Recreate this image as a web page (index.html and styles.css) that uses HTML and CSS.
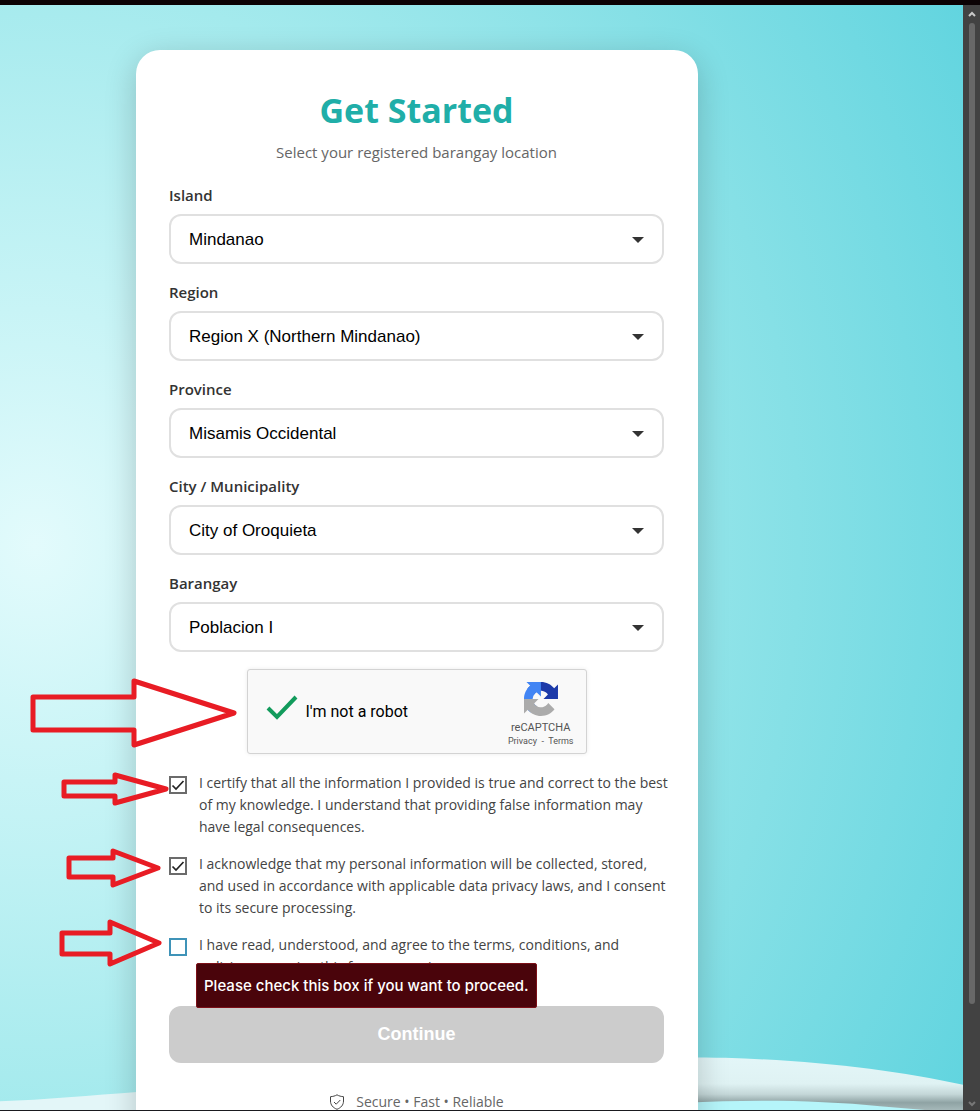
FILE: index.html
```html
<!DOCTYPE html>
<html lang="en">
<head>
    <meta charset="UTF-8">
    <meta name="viewport" content="width=device-width, initial-scale=1.0">
    <title>Get Started</title>
    <link rel="stylesheet" href="styles.css">
</head>
<body>
    <div class="window">
        <main class="page">
            <svg class="waves" viewBox="0 0 963 60" preserveAspectRatio="none" aria-hidden="true">
                <defs>
                    <linearGradient id="wave" x1="0" y1="0" x2="0" y2="1">
                        <stop offset="0" stop-color="#e3f6f8"/>
                        <stop offset="0.5" stop-color="#dff2f3"/>
                        <stop offset="0.7" stop-color="#c4d7d8"/>
                        <stop offset="0.86" stop-color="#8fa3a4"/>
                        <stop offset="1" stop-color="#a5b8b9"/>
                    </linearGradient>
                </defs>
                <path fill="#e3f6f8" d="M0 51 C45 49 90 45 140 41 L400 20 V60 H0Z"/>
                <path fill="url(#wave)" d="M400 20 C560 6 650 5 725 6 C820 9 895 19 963 34 V60 H400Z"/>
                <path fill="#b5f5fa" d="M600 60 C700 48 800 48 880 56 L925 60Z"/>
            </svg>

            <div class="card">
                <h1>Get Started</h1>
                <p class="subtitle">Select your registered barangay location</p>
                <form class="location-form">
                    <label for="island">Island</label>
                    <select id="island"><option>Mindanao</option></select>
                    <label for="region">Region</label>
                    <select id="region"><option>Region X (Northern Mindanao)</option></select>
                    <label for="province">Province</label>
                    <select id="province"><option>Misamis Occidental</option></select>
                    <label for="city">City / Municipality</label>
                    <select id="city"><option>City of Oroquieta</option></select>
                    <label for="barangay">Barangay</label>
                    <select id="barangay"><option>Poblacion I</option></select>

                    <div class="captcha">
                        <svg class="captcha-check" viewBox="0 0 34 28" aria-hidden="true">
                            <path d="M3 14 L12 23 L31 3" fill="none" stroke="#129b5c" stroke-width="4"/>
                        </svg>
                        <span class="captcha-text">I'm not a robot</span>
                        <div class="captcha-brand">
                            <svg class="captcha-logo" viewBox="0 0 64 64" aria-hidden="true">
                                <path fill="#1c3aa9" d="M64 31.955l-.033-1.37V4.687l-7.16 7.16C50.948 4.674 42.033.093 32.05.093c-10.4 0-19.622 4.96-25.458 12.64l11.736 11.86a15.55 15.55 0 0 1 4.754-5.334c2.05-1.6 4.952-2.906 8.968-2.906.485 0 .86.057 1.135.163 4.976.393 9.288 3.14 11.828 7.124l-8.307 8.307L64 31.953"/>
                                <path fill="#4285f4" d="M31.862.094l-1.37.033H4.594l7.16 7.16C4.58 13.147 0 22.06 0 32.046c0 10.4 4.96 19.622 12.64 25.458L24.5 45.768a15.55 15.55 0 0 1-5.334-4.754c-1.6-2.05-2.906-4.952-2.906-8.968 0-.485.057-.86.163-1.135.393-4.976 3.14-9.288 7.124-11.828l8.307 8.307L31.86.095"/>
                                <path fill="#ababab" d="M.001 32.045l.033 1.37v25.898l7.16-7.16c5.86 7.173 14.774 11.754 24.76 11.754 10.4 0 19.622-4.96 25.458-12.64l-11.736-11.86a15.55 15.55 0 0 1-4.754 5.334c-2.05 1.6-4.952 2.906-8.968 2.906-.485 0-.86-.057-1.135-.163-4.976-.393-9.288-3.14-11.828-7.124l8.307-8.307c-10.522.04-22.4.066-27.295-.005"/>
                            </svg>
                            <span class="captcha-name">reCAPTCHA</span>
                            <span class="captcha-links"><a href="#">Privacy</a> &nbsp;-&nbsp; <a href="#">Terms</a></span>
                        </div>
                    </div>

                    <div class="consent">
                        <input type="checkbox" id="certify" checked>
                        <label for="certify">I certify that all the information I provided is true and correct to the best<br>of my knowledge. I understand that providing false information may<br>have legal consequences.</label>
                    </div>
                    <div class="consent">
                        <input type="checkbox" id="privacy" checked>
                        <label for="privacy">I acknowledge that my personal information will be collected, stored,<br>and used in accordance with applicable data privacy laws, and I consent<br>to its secure processing.</label>
                    </div>
                    <div class="consent">
                        <input type="checkbox" id="terms" class="missing">
                        <label for="terms">I have read, understood, and agree to the terms, conditions, and<br>policies governing this form or service.</label>
                        <div class="tooltip" role="alert">Please check this box if you want to proceed.</div>
                    </div>

                    <button type="button" disabled>Continue</button>
                </form>
                <p class="tagline">
                    <svg viewBox="0 0 16 16" fill="none" stroke="#444" aria-hidden="true">
                        <path d="M8 .8C6.2 2 3.8 2.5 1.5 2.7V7c0 4 2.5 6.7 6.5 8.3 4-1.6 6.5-4.3 6.5-8.3V2.7C12.2 2.5 9.8 2 8 .8Z"/>
                        <path d="M5 8l2.200 2.200L11.300 6"/>
                    </svg>
                    <span>Secure • Fast • Reliable</span>
                </p>
            </div>

            <svg class="arrows" width="240" height="300" viewBox="0 0 240 300" aria-hidden="true">
                <path d="M33 27H134V11L234 43L134 75V60H33Z"/>
                <path d="M64 112H115V105L166 119L115 133V126H64Z"/>
                <path d="M69 188H113V181L158 198L113 215V207H69Z"/>
                <path d="M62 263H110V252L159 273L110 294V284H62Z"/>
            </svg>
        </main>
        <div class="scrollbar" aria-hidden="true">
            <svg viewBox="0 0 8 6"><path d="M1 5L4 2L7 5" stroke="#c8c8c8"/></svg>
            <div class="thumb"></div>
            <svg viewBox="0 0 8 6"><path d="M1 1L4 4L7 1" stroke="#777"/></svg>
        </div>
    </div>
</body>
</html>
```
FILE: styles.css
```css
* {
    box-sizing: border-box;
}
body {
    font-family: "Open Sans", "Noto Sans", sans-serif;
    margin: 0;
    background-color: #0b0204;
    color: #333;
}
.window {
    display: grid;
    grid-template-columns: 1fr 17px;
    height: 100vh;
    border-top: 5px solid #0b0204;
    border-bottom: 1px solid #1a1a1f;
}
.page {
    position: relative;
    overflow: hidden;
    padding: 45px 265px 0 136px;
    background: radial-gradient(ellipse 1060px 1180px at 35px 540px, #e3fbfc 0%, #c8f4f6 20%, #a4eaed 48%, #86e0e6 72%, #60d4df 100%);
}
.waves {
    position: absolute;
    left: 0;
    bottom: 0;
    width: 100%;
    height: 58px;
}
.card {
    position: relative;
    max-width: 562px;
    padding: 36px 34px 40px 33px;
    background-color: #fff;
    border-radius: 24px;
    box-shadow: 0 8px 32px rgba(0, 0, 0, 0.2);
}
h1 {
    margin: 0;
    font-size: 34px;
    line-height: 48px;
    text-align: center;
    color: #20aea8;
}
.subtitle {
    margin: 7px 0 21px;
    font-size: 15px;
    line-height: 22px;
    text-align: center;
    color: #666;
}
.location-form > label {
    display: block;
    margin-bottom: 8px;
    font-size: 15px;
    font-weight: 600;
    line-height: 22px;
}
select {
    display: block;
    appearance: none;
    width: 100%;
    height: 50px;
    margin-bottom: 17px;
    padding: 0 40px 0 18px;
    border: 2px solid #e0e0e0;
    border-radius: 12px;
    font-family: "Liberation Sans", Arial, sans-serif;
    font-size: 17px;
    color: #000;
    background: #fff url("data:image/svg+xml,%3Csvg xmlns='http://www.w3.org/2000/svg' viewBox='0 0 12 6'%3E%3Cpath fill='%23333' d='M0 0h12L6 6z'/%3E%3C/svg%3E") no-repeat right 18px top 21px / 12px 6px;
}
.captcha {
    display: flex;
    align-items: center;
    width: 340px;
    height: 85px;
    margin: 0 auto 18px;
    padding: 0 12px 0 17px;
    border: 1px solid #d3d3d3;
    border-radius: 3px;
    background-color: #f9f9f9;
    box-shadow: 0 0 4px rgba(0, 0, 0, 0.08);
    font-family: Roboto, sans-serif;
}
.captcha-check {
    width: 34px;
    height: 28px;
    margin-bottom: 8px;
}
.captcha-text {
    flex: 1;
    margin-left: 7px;
    font-size: 16px;
    color: #000;
}
.captcha-brand {
    display: flex;
    flex-direction: column;
    align-items: center;
    padding-top: 7px;
    color: #555;
}
.captcha-logo {
    width: 34px;
    height: 34px;
    margin-bottom: 5px;
}
.captcha-name {
    font-size: 11px;
    line-height: 14px;
}
.captcha-links {
    font-size: 9px;
    line-height: 13px;
}
.captcha-links a {
    color: #555;
    text-decoration: none;
}
.consent {
    position: relative;
    display: flex;
    align-items: flex-start;
    gap: 12px;
    margin-bottom: 15px;
    font-size: 14px;
    line-height: 22px;
    color: #444;
    white-space: nowrap;
}
.consent input {
    appearance: none;
    flex: none;
    width: 18px;
    height: 18px;
    margin: 4px 0 0;
    border: 2px solid #6b6b6b;
    background-color: #fff;
}
.consent input:checked {
    background: #fff url("data:image/svg+xml,%3Csvg xmlns='http://www.w3.org/2000/svg' viewBox='0 0 14 14'%3E%3Cpath fill='none' stroke='%23222' stroke-width='1.7' d='M1.500 7.500L5 11L12.500 3'/%3E%3C/svg%3E") no-repeat center / 14px 14px;
}
.consent input.missing {
    border-color: #3f93b8;
}
.tooltip {
    position: absolute;
    top: 29px;
    left: 27px;
    padding: 0 7px;
    border: 1px solid #7d1018;
    border-radius: 2px;
    background-color: #4a040b;
    color: #fff;
    font-family: Inter, sans-serif;
    font-size: 15px;
    font-weight: 500;
    line-height: 43px;
}
button {
    display: block;
    width: 100%;
    height: 57px;
    margin-top: 28px;
    border: none;
    border-radius: 12px;
    background-color: #ccc;
    color: #fff;
    font-family: "Liberation Sans", Arial, sans-serif;
    font-size: 18px;
    font-weight: bold;
}
.tagline {
    display: flex;
    justify-content: center;
    align-items: center;
    gap: 11px;
    margin: 28px 0 0;
    font-size: 14px;
    line-height: 22px;
    color: #666;
}
.tagline svg {
    width: 16px;
    height: 16px;
}
.arrows {
    position: absolute;
    top: 665px;
    left: 0;
    fill: none;
    stroke: #e81c24;
    stroke-width: 5px;
    stroke-linejoin: round;
}
.scrollbar {
    display: flex;
    flex-direction: column;
    align-items: center;
    padding: 6px 0 3px;
    background-color: #424242;
}
.scrollbar svg {
    width: 8px;
    height: 6px;
    fill: none;
    stroke-width: 2px;
}
.thumb {
    flex: 1;
    width: 6px;
    margin: 6px 0 97px;
    border-radius: 3px;
    background-color: #686868;
}
```
